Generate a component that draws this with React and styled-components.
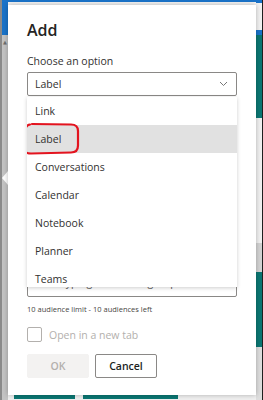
import styled, { createGlobalStyle } from 'styled-components'

const GlobalStyle = createGlobalStyle`
  html, body {
    margin: 0;
    padding: 0;
    background: #ffffff;
  }
  body {
    font-family: 'Open Sans', 'Noto Sans', sans-serif;
  }
`

const OPTIONS = ['Link', 'Label', 'Conversations', 'Calendar', 'Notebook', 'Planner', 'Teams']

// page behind the dialog, right edge, top to bottom
const RIGHT_BANDS = [
  { h: 3, bg: '#1a73c9' },
  { h: 27, bg: '#f2f2f2' },
  { h: 5, bg: '#1a73c9' },
  { h: 83, bg: '#0b7773' },
  { h: 125, bg: '#f1f1f1' },
  { h: 29, bg: '#d3d3d3' },
  { h: 75, bg: '#0b7773' },
  { h: 53, bg: '#dedede' },
]

export default function App() {
  return (
    <>
      <GlobalStyle />
      <Frame>
        <LeftRail>
          <RailBand $h={35} $bg="#1a73c9" />
          <ScrollArrow>▲</ScrollArrow>
          <Beak />
        </LeftRail>

        <TopStrip />

        <Dialog>
          <Title>Add</Title>

          <FieldLabel>Choose an option</FieldLabel>
          <SelectWrap>
            <Select>
              <span>Label</span>
              <svg width="9" height="6" viewBox="0 0 9 6">
                <path d="M1 1l3.5 3.5L8 1" fill="none" stroke="#777" strokeWidth="1" />
              </svg>
            </Select>

            <Listbox>
              {OPTIONS.map((opt) => (
                <Option key={opt} $selected={opt === 'Label'}>
                  {opt}
                </Option>
              ))}
              <Marker width="57" height="32" viewBox="0 0 57 32">
                <path
                  d="M7 1.5 C 3 2, 1.5 6, 1.5 12 L 1.5 25 C 1.5 29.5, 3.5 30.5, 8 30.5 L 48 29.5 C 53 29.5, 55 27.5, 55 22.5 L 55 8 C 55 3.5, 53 1.5, 48 1.5 L 9 1"
                  fill="none"
                  stroke="#e3141f"
                  strokeWidth="2.2"
                  strokeLinecap="round"
                />
              </Marker>
            </Listbox>
          </SelectWrap>

          {/* fields hidden behind the open list */}
          <Field>
            <Input />
          </Field>
          <Field>
            <Input />
          </Field>
          <Field>
            <Input>Start typing a name or group</Input>
          </Field>

          <Hint>10 audience limit - 10 audiences left</Hint>

          <CheckRow>
            <CheckBox />
            <CheckText>Open in a new tab</CheckText>
          </CheckRow>

          <Actions>
            <Button $disabled>OK</Button>
            <Button>Cancel</Button>
          </Actions>
        </Dialog>

        <BottomStrip>
          <TealBar $w={61} />
          <TealBar $w={95} />
        </BottomStrip>

        <RightRail>
          {RIGHT_BANDS.map((b, i) => (
            <RailBand key={i} $h={b.h} $bg={b.bg} />
          ))}
        </RightRail>
      </Frame>
    </>
  )
}

const Frame = styled.div`
  width: 263px;
  height: 400px;
  display: grid;
  grid-template-columns: 8px 248px 7px;
  grid-template-rows: 5px 390px 5px;
  overflow: hidden;
  background: #eeeeee;
`

const LeftRail = styled.div`
  grid-column: 1;
  grid-row: 1 / 4;
  display: flex;
  flex-direction: column;
  background: #c3c3c3;
  border-left: 2px solid #8a8a8a;
  box-sizing: border-box;
`

const RightRail = styled.div`
  grid-column: 3;
  grid-row: 1 / 4;
  display: flex;
  flex-direction: column;
  border-right: 1px solid #1f1f1f;
  box-sizing: border-box;
`

const RailBand = styled.div`
  flex: none;
  height: ${({ $h }) => $h}px;
  background: ${({ $bg }) => $bg};
`

const ScrollArrow = styled.span`
  font-size: 5px;
  line-height: 8px;
  color: #6d6d6d;
  text-align: center;
  padding-top: 3px;
  font-family: 'DejaVu Sans', sans-serif;
`

const Beak = styled.div`
  margin-top: 125px;
  width: 0;
  height: 0;
  border-top: 7px solid transparent;
  border-bottom: 7px solid transparent;
  border-right: 6px solid #ffffff;
`

const TopStrip = styled.div`
  grid-column: 2;
  grid-row: 1;
  background: #f4f4f4;
  border-top: 2px solid #1a73c9;
`

const BottomStrip = styled.div`
  grid-column: 2;
  grid-row: 3;
  display: flex;
  gap: 8px;
  padding-left: 6px;
  background: #f0f0f0;
`

const TealBar = styled.div`
  width: ${({ $w }) => $w}px;
  height: 4px;
  background: #0b7773;
`

const Dialog = styled.div`
  grid-column: 2;
  grid-row: 2;
  position: relative;
  z-index: 1;
  background: #ffffff;
  box-shadow: 0 0 5px rgba(0, 0, 0, 0.28);
  padding: 15px 19px 0;
  display: flex;
  flex-direction: column;
  color: #323130;
`

const Title = styled.h1`
  margin: 0;
  font-size: 16px;
  line-height: 20px;
  font-weight: 600;
  color: #252423;
`

const FieldLabel = styled.div`
  margin-top: 13px;
  font-size: 10.5px;
  line-height: 16px;
  font-weight: 400;
  color: #323130;
`

const SelectWrap = styled.div`
  position: relative;
  margin-top: 3px;
`

const Select = styled.div`
  height: 24px;
  box-sizing: border-box;
  border: 1px solid #8a8886;
  border-radius: 2px;
  display: flex;
  align-items: center;
  justify-content: space-between;
  padding: 0 8px 0 7px;
  font-size: 10.5px;
  color: #323130;
`

const Listbox = styled.div`
  position: absolute;
  top: 25px;
  left: 0;
  right: 0;
  height: 190px;
  overflow: hidden;
  background: #ffffff;
  box-shadow: 0 1px 4px rgba(0, 0, 0, 0.2);
  z-index: 3;
`

const Option = styled.div`
  height: 28px;
  display: flex;
  align-items: center;
  padding-left: 8px;
  font-size: 10.5px;
  color: #323130;
  background: ${({ $selected }) => ($selected ? '#e1e1e1' : '#ffffff')};
`

const Marker = styled.svg`
  position: absolute;
  left: -4px;
  top: 26px;
  overflow: visible;
`

const Field = styled.div`
  margin-top: 41px;
  display: flex;
  flex-direction: column;
`

const Input = styled.div`
  height: 26px;
  box-sizing: border-box;
  border: 1px solid #8a8886;
  border-radius: 2px;
  padding: 3px 8px 0;
  font-size: 10.5px;
  line-height: 14px;
  color: #605e5c;
`

const Hint = styled.div`
  margin-top: 7px;
  font-size: 7.5px;
  line-height: 11px;
  color: #484644;
`

const CheckRow = styled.div`
  margin-top: 12px;
  display: flex;
  align-items: center;
  gap: 7px;
`

const CheckBox = styled.div`
  width: 15px;
  height: 15px;
  box-sizing: border-box;
  border: 1px solid #b3b0ad;
  border-radius: 2px;
`

const CheckText = styled.span`
  font-size: 10.5px;
  color: #b3b0ad;
`

const Actions = styled.div`
  margin-top: 12px;
  display: flex;
  gap: 6px;
`

const Button = styled.button`
  width: 62px;
  height: 24px;
  box-sizing: border-box;
  border-radius: 2px;
  font-family: inherit;
  font-size: 10.5px;
  font-weight: 600;
  padding: 0;
  border: 1px solid ${({ $disabled }) => ($disabled ? '#f3f2f1' : '#8a8886')};
  background: ${({ $disabled }) => ($disabled ? '#f3f2f1' : '#ffffff')};
  color: ${({ $disabled }) => ($disabled ? '#b3b0ad' : '#201f1e')};
`
